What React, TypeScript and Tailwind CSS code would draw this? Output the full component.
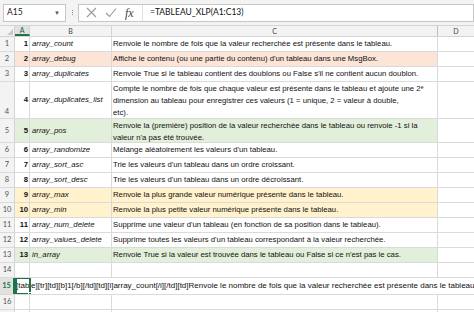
import React from "react";

type Row = {
  n: number;
  name: string;
  desc: React.ReactNode;
  bg?: string;
  h: string;
  top?: boolean;
};

const rows: Row[] = [
  { n: 1, name: "array_count", desc: "Renvoie le nombre de fois que la valeur recherchée est présente dans le tableau.", h: "h-[15px]" },
  { n: 2, name: "array_debug", desc: "Affiche le contenu (ou une partie du contenu) d'un tableau dans une MsgBox.", bg: "bg-[#fce4d6]", h: "h-[15px]" },
  { n: 3, name: "array_duplicates", desc: "Renvoie True si le tableau contient des doublons ou False s'il ne contient aucun doublon.", h: "h-[15px]" },
  {
    n: 4,
    name: "array_duplicates_list",
    desc: (
      <>
        Compte le nombre de fois que chaque valeur est présente dans le tableau et ajoute une 2
        <sup className="text-[5px]">e</sup>
        <br />
        dimension au tableau pour enregistrer ces valeurs (1 = unique, 2 = valeur à double,
        <br />
        etc).
      </>
    ),
    h: "h-[37px]",
    top: true,
  },
  {
    n: 5,
    name: "array_pos",
    desc: (
      <>
        Renvoie la (première) position de la valeur recherchée dans le tableau ou renvoie -1 si la
        <br />
        valeur n'a pas été trouvée.
      </>
    ),
    bg: "bg-[#e2efda]",
    h: "h-[24px]",
    top: true,
  },
  { n: 6, name: "array_randomize", desc: "Mélange aléatoirement les valeurs d'un tableau.", h: "h-[15px]" },
  { n: 7, name: "array_sort_asc", desc: "Trie les valeurs d'un tableau dans un ordre croissant.", h: "h-[15px]" },
  { n: 8, name: "array_sort_desc", desc: "Trie les valeurs d'un tableau dans un ordre décroissant.", h: "h-[15px]" },
  { n: 9, name: "array_max", desc: "Renvoie la plus grande valeur numérique présente dans le tableau.", bg: "bg-[#fff2cc]", h: "h-[15px]" },
  { n: 10, name: "array_min", desc: "Renvoie la plus petite valeur numérique présente dans le tableau.", bg: "bg-[#fff2cc]", h: "h-[15px]" },
  { n: 11, name: "array_num_delete", desc: "Supprime une valeur d'un tableau (en fonction de sa position dans le tableau).", h: "h-[15px]" },
  { n: 12, name: "array_values_delete", desc: "Supprime toutes les valeurs d'un tableau correspondant à la valeur recherchée.", h: "h-[15px]" },
  { n: 13, name: "in_array", desc: "Renvoie True si la valeur est trouvée dans le tableau ou False si ce n'est pas le cas.", bg: "bg-[#e2efda]", h: "h-[15px]" },
];

function FormulaBar() {
  return (
    <div className="flex h-[26px] items-center border-b border-[#d4d4d4] bg-[#f3f3f3] pl-[3px] [font-family:Lato,'Liberation_Sans',sans-serif]">
      <div className="flex h-[18px] w-[63px] items-center justify-between border border-[#c6c6c6] bg-white pl-[3px] pr-[5px] text-[8.5px] text-[#222]">
        <span>A15</span>
        <span className="text-[6px] text-[#555]">▼</span>
      </div>
      <div className="flex w-[12px] flex-col items-center gap-[1px]">
        <span className="h-[1px] w-[1px] bg-[#888]" />
        <span className="h-[1px] w-[1px] bg-[#888]" />
        <span className="h-[1px] w-[1px] bg-[#888]" />
      </div>
      <div className="flex h-[18px] flex-1 items-center border border-[#c6c6c6] bg-white">
        <div className="flex h-full w-[64px] items-center gap-[8px] border-r border-[#e0e0e0] pl-[7px]">
          <svg width="11" height="11" viewBox="0 0 11 11">
            <path d="M1 1 L10 10 M10 1 L1 10" stroke="#9a9a9a" strokeWidth="1.1" fill="none" />
          </svg>
          <svg width="12" height="11" viewBox="0 0 12 11">
            <path d="M1 6 L4.5 9.5 L11 1.5" stroke="#9a9a9a" strokeWidth="1.1" fill="none" />
          </svg>
          <span className="text-[12px] italic text-[#444] [font-family:'Liberation_Serif',serif]">fx</span>
        </div>
        <span className="pl-[7px] text-[8.5px] text-[#111]">=TABLEAU_XLP(A1:C13)</span>
      </div>
    </div>
  );
}

function HeaderRow() {
  return (
    <div className="flex h-[11px] border-b border-[#d4d4d4] bg-[#f3f3f3] text-[7px] text-[#444] [font-family:Lato,'Liberation_Sans',sans-serif]">
      <div className="relative w-[15px] border-r border-[#d4d4d4]">
        <svg className="absolute bottom-[1px] right-[1px]" width="6" height="6" viewBox="0 0 6 6">
          <path d="M6 0 L6 6 L0 6 Z" fill="#c8c8c8" />
        </svg>
      </div>
      <div className="flex w-[15px] items-center justify-center border-r border-b-2 border-r-[#d4d4d4] border-b-[#217346] bg-[#e1e1e1] text-[#1e5c37]">
        A
      </div>
      <div className="flex w-[82px] items-center justify-center border-r border-[#d4d4d4]">B</div>
      <div className="flex w-[326px] items-center justify-center border-r border-[#bdbdbd]">C</div>
      <div className="flex flex-1 items-center justify-center">D</div>
    </div>
  );
}

function RowHead({ n, bottom }: { n: number; bottom?: boolean }) {
  return (
    <div
      className={`flex w-[15px] justify-center border-r border-[#d4d4d4] bg-[#f3f3f3] text-[7.5px] text-[#555] [font-family:Lato,'Liberation_Sans',sans-serif] ${
        bottom ? "items-end pb-[1px]" : "items-center"
      }`}
    >
      {n}
    </div>
  );
}

function DataRow({ r }: { r: Row }) {
  const bg = r.bg ?? "bg-white";
  return (
    <div className={`flex ${r.h} border-b border-[#dadada]`}>
      <RowHead n={r.n} bottom={r.n === 4} />
      <div className={`flex w-[15px] items-center justify-end border-r border-[#dadada] pr-[1px] font-bold ${bg}`}>
        {r.n}
      </div>
      <div className={`flex w-[82px] items-center whitespace-nowrap border-r border-[#dadada] pl-[2px] italic ${bg}`}>
        {r.name}
      </div>
      <div
        className={`flex w-[326px] whitespace-nowrap border-r border-[#dadada] pl-[1px] leading-[12px] ${bg} ${
          r.top ? "items-start pt-[1px]" : "items-center"
        }`}
      >
        <div>{r.desc}</div>
      </div>
      <div className="flex-1 bg-white" />
    </div>
  );
}

function EmptyRow({ n }: { n: number }) {
  return (
    <div className="flex h-[15px] border-b border-[#dadada]">
      <RowHead n={n} />
      <div className="w-[15px] border-r border-[#dadada]" />
      <div className="w-[82px] border-r border-[#dadada]" />
      <div className="w-[326px] border-r border-[#dadada]" />
      <div className="flex-1" />
    </div>
  );
}

export default function App() {
  return (
    <div className="h-[312px] w-[474px] overflow-hidden bg-white text-[7.75px] text-[#111] [font-family:'Liberation_Sans',Arial,sans-serif]">
      <FormulaBar />
      <HeaderRow />
      {rows.map((r) => (
        <DataRow key={r.n} r={r} />
      ))}
      <EmptyRow n={14} />
      <div className="flex h-[17px] border-b border-[#dadada]">
        <div className="flex w-[15px] items-center justify-center border-r-2 border-[#217346] bg-[#e1e1e1] text-[7.5px] font-bold text-[#217346] [font-family:Lato,'Liberation_Sans',sans-serif]">
          15
        </div>
        <div className="relative flex flex-1 items-center overflow-hidden whitespace-nowrap pl-[1px] text-[8px]">
          <div className="absolute left-0 top-[-1px] h-[18px] w-[16px] border-2 border-[#217346]">
            <span className="absolute bottom-[-3px] right-[-3px] h-[4px] w-[4px] border border-white bg-[#217346]" />
          </div>
          [table][tr][td][b]1[/b][/td][td][i]array_count[/i][/td][td]Renvoie le nombre de fois que la valeur recherchée est présente dans le tableau.[/td][/tr]
        </div>
      </div>
      <EmptyRow n={16} />
      <EmptyRow n={17} />
    </div>
  );
}
